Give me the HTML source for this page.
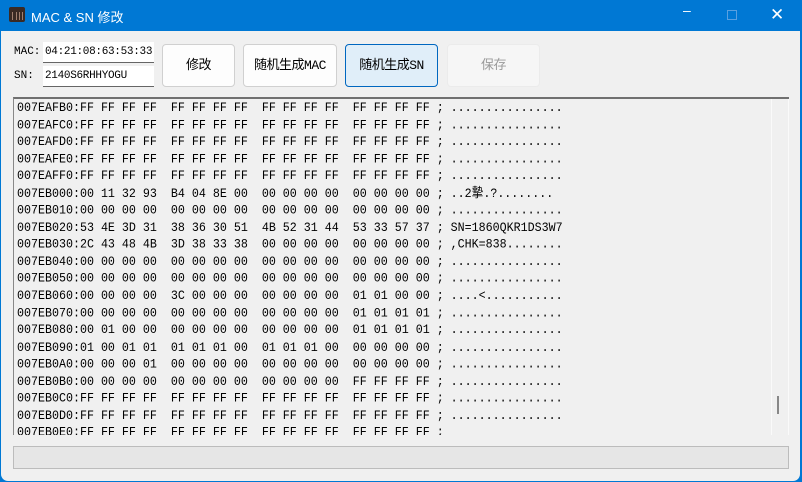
<!DOCTYPE html>
<html><head><meta charset="utf-8"><style>
*{margin:0;padding:0;box-sizing:border-box}
body{width:802px;height:482px;overflow:hidden;background:#0078d4;font-family:"Liberation Sans","Noto Sans CJK SC",sans-serif}
.win{position:absolute;left:0;top:0;width:802px;height:482px;border-radius:8px;background:#0078d4}
.client{position:absolute;left:1px;top:31px;width:799px;height:450px;background:#f0f0f0;border-radius:0 0 7px 7px}
.title{position:absolute;left:31px;top:7px;color:#fff;font-size:13px}
.icon{position:absolute;left:9px;top:7px;width:16px;height:15px;background:#3a2a24;border-radius:2px}
.icon i{position:absolute;top:5px;width:1px;height:8px;background:#a08070}
.ctl{position:absolute;top:8px;color:#fff;font-size:14px}
.lbl{position:absolute;font-family:"Liberation Mono","Noto Sans CJK SC",monospace;font-size:11px;color:#000}
.inp{position:absolute;background:#fff;border-bottom:1px solid #666;font-family:"Liberation Mono",monospace;font-size:11px;letter-spacing:-0.3px;padding-left:2px;line-height:20px;white-space:nowrap;overflow:hidden}
.btn{position:absolute;top:44px;height:43px;background:#fdfdfd;border:1px solid #d0d0d0;border-radius:4px;font-size:13px;text-align:center;line-height:41px;color:#000;font-family:"Liberation Mono","Noto Sans CJK SC",monospace;letter-spacing:-0.5px}
.hex{position:absolute;left:13px;top:97px;width:776px;height:338px;border-top:2px solid #707070;border-left:1px solid #888;background:#f0f0f0;overflow:hidden}
pre{position:absolute;left:3px;top:1px;font-family:"Liberation Mono","Noto Sans CJK SC",monospace;font-size:11.67px;line-height:15.55px;color:#000;transform:scaleY(1.1);transform-origin:0 0}
.sb{position:absolute;left:757px;top:0;width:18px;height:338px;border-left:1px solid #fafafa;border-right:1px solid #fafafa}
.thumb{position:absolute;left:777px;top:396px;width:2px;height:18px;background:#888}
.status{position:absolute;left:13px;top:446px;width:776px;height:23px;background:#e6e6e6;border:1px solid #bcbcbc}
</style></head><body>
<div class="win">
<div class="icon"><i style="left:3px"></i><i style="left:7px"></i><i style="left:10px"></i><i style="left:13px"></i></div>
<div class="title">MAC &amp; SN 修改</div>
<div class="ctl" style="left:683px;top:2px">–</div>
<div style="position:absolute;left:727px;top:10px;width:10px;height:10px;border:1px solid #5aa0e0"></div>
<div class="ctl" style="left:770px;top:5px;font-size:17px">✕</div>
<div class="client"></div>
<div class="lbl" style="left:14px;top:46px">MAC:</div>
<div class="lbl" style="left:14px;top:70px">SN:</div>
<div class="inp" style="left:43px;top:42px;width:111px">04:21:08:63:53:33</div>
<div class="inp" style="left:43px;top:66px;width:111px">2140S6RHHYOGU</div>
<div class="btn" style="left:162px;width:73px">修改</div>
<div class="btn" style="left:243px;width:94px">随机生成MAC</div>
<div class="btn" style="left:345px;width:93px;background:#e0eef9;border-color:#0067c0">随机生成SN</div>
<div class="btn" style="left:447px;width:93px;background:#f6f6f6;border-color:#ebebeb;color:#9a9a9a">保存</div>
<div class="hex"><pre>007EAFB0:FF FF FF FF  FF FF FF FF  FF FF FF FF  FF FF FF FF ; ................
007EAFC0:FF FF FF FF  FF FF FF FF  FF FF FF FF  FF FF FF FF ; ................
007EAFD0:FF FF FF FF  FF FF FF FF  FF FF FF FF  FF FF FF FF ; ................
007EAFE0:FF FF FF FF  FF FF FF FF  FF FF FF FF  FF FF FF FF ; ................
007EAFF0:FF FF FF FF  FF FF FF FF  FF FF FF FF  FF FF FF FF ; ................
007EB000:00 11 32 93  B4 04 8E 00  00 00 00 00  00 00 00 00 ; ..2摯.?........
007EB010:00 00 00 00  00 00 00 00  00 00 00 00  00 00 00 00 ; ................
007EB020:53 4E 3D 31  38 36 30 51  4B 52 31 44  53 33 57 37 ; SN=1860QKR1DS3W7
007EB030:2C 43 48 4B  3D 38 33 38  00 00 00 00  00 00 00 00 ; ,CHK=838........
007EB040:00 00 00 00  00 00 00 00  00 00 00 00  00 00 00 00 ; ................
007EB050:00 00 00 00  00 00 00 00  00 00 00 00  00 00 00 00 ; ................
007EB060:00 00 00 00  3C 00 00 00  00 00 00 00  01 01 00 00 ; ....<...........
007EB070:00 00 00 00  00 00 00 00  00 00 00 00  01 01 01 01 ; ................
007EB080:00 01 00 00  00 00 00 00  00 00 00 00  01 01 01 01 ; ................
007EB090:01 00 01 01  01 01 01 00  01 01 01 00  00 00 00 00 ; ................
007EB0A0:00 00 00 01  00 00 00 00  00 00 00 00  00 00 00 00 ; ................
007EB0B0:00 00 00 00  00 00 00 00  00 00 00 00  FF FF FF FF ; ................
007EB0C0:FF FF FF FF  FF FF FF FF  FF FF FF FF  FF FF FF FF ; ................
007EB0D0:FF FF FF FF  FF FF FF FF  FF FF FF FF  FF FF FF FF ; ................
007EB0E0:FF FF FF FF  FF FF FF FF  FF FF FF FF  FF FF FF FF ;</pre>
<div class="sb"></div></div>
<div class="thumb"></div>
<div class="status"></div>
</div>
</body></html>
